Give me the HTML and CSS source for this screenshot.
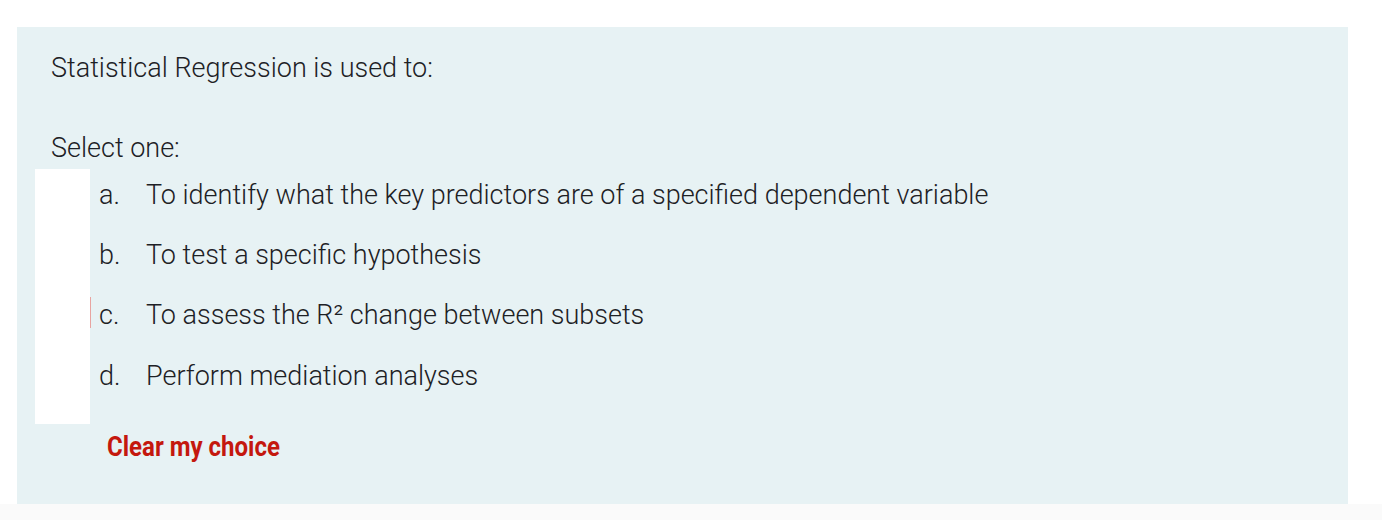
FILE: index.html
```html
<!DOCTYPE html>
<html>
<head>
<meta charset="utf-8">
<link rel="stylesheet" href="styles.css">
</head>
<body>
<div class="page">
  <div class="que">
    <div class="qtext">Statistical Regression is used to:</div>
    <div class="prompt">Select one:</div>
    <div class="answer">
      <div class="gutter"></div>
      <div class="options">
        <div class="opt"><span class="letter">a.</span><span class="label">To identify what the key predictors are of a specified dependent variable</span></div>
        <div class="opt"><span class="letter">b.</span><span class="label">To test a specific hypothesis</span></div>
        <div class="opt opt-focus"><span class="letter">c.</span><span class="label">To assess the R² change between subsets</span></div>
        <div class="opt"><span class="letter">d.</span><span class="label">Perform mediation analyses</span></div>
      </div>
    </div>
    <div class="clear"><a class="clear-link">Clear my choice</a></div>
  </div>
</div>
</body>
</html>
```
FILE: styles.css
```css
html, body {
  margin: 0;
  padding: 0;
  background: #fafafa;
}
body {
  font-family: Roboto, "Noto Sans", sans-serif;
  font-weight: 300;
  color: #1d2125;
}
.page {
  background: #ffffff;
  padding: 27px 34px 0 17px;
}
.que {
  background: #e7f2f4;
  padding: 23px 18px 0 18px;
  height: 477px;
  box-sizing: border-box;
}
.qtext {
  font-size: 27px;
  line-height: 36px;
  padding-left: 16px;
}
.prompt {
  font-size: 27px;
  line-height: 36px;
  padding-left: 16px;
  margin-top: 44px;
}
.answer {
  display: flex;
  margin-top: 3px;
}
.gutter {
  width: 55px;
  background: #ffffff;
}
.options {
  padding-bottom: 15px;
}
.opt {
  display: flex;
  font-size: 27px;
  line-height: 36px;
  padding: 8px 0 16px 0;
  position: relative;
}
.opt:last-child {
  padding-top: 9px;
  padding-bottom: 15px;
}
.opt-focus::before {
  content: "";
  position: absolute;
  left: 0;
  top: 8px;
  height: 31px;
  width: 1px;
  background: #e8a4a0;
}
.letter {
  width: 47px;
  padding-left: 9px;
}
.clear {
  padding-left: 72px;
  margin-top: 5px;
}
.clear-link {
  display: inline-block;
  font-weight: 700;
  font-size: 27px;
  line-height: 36px;
  color: #c4180e;
  transform: scaleX(0.89);
  transform-origin: left center;
}
```
